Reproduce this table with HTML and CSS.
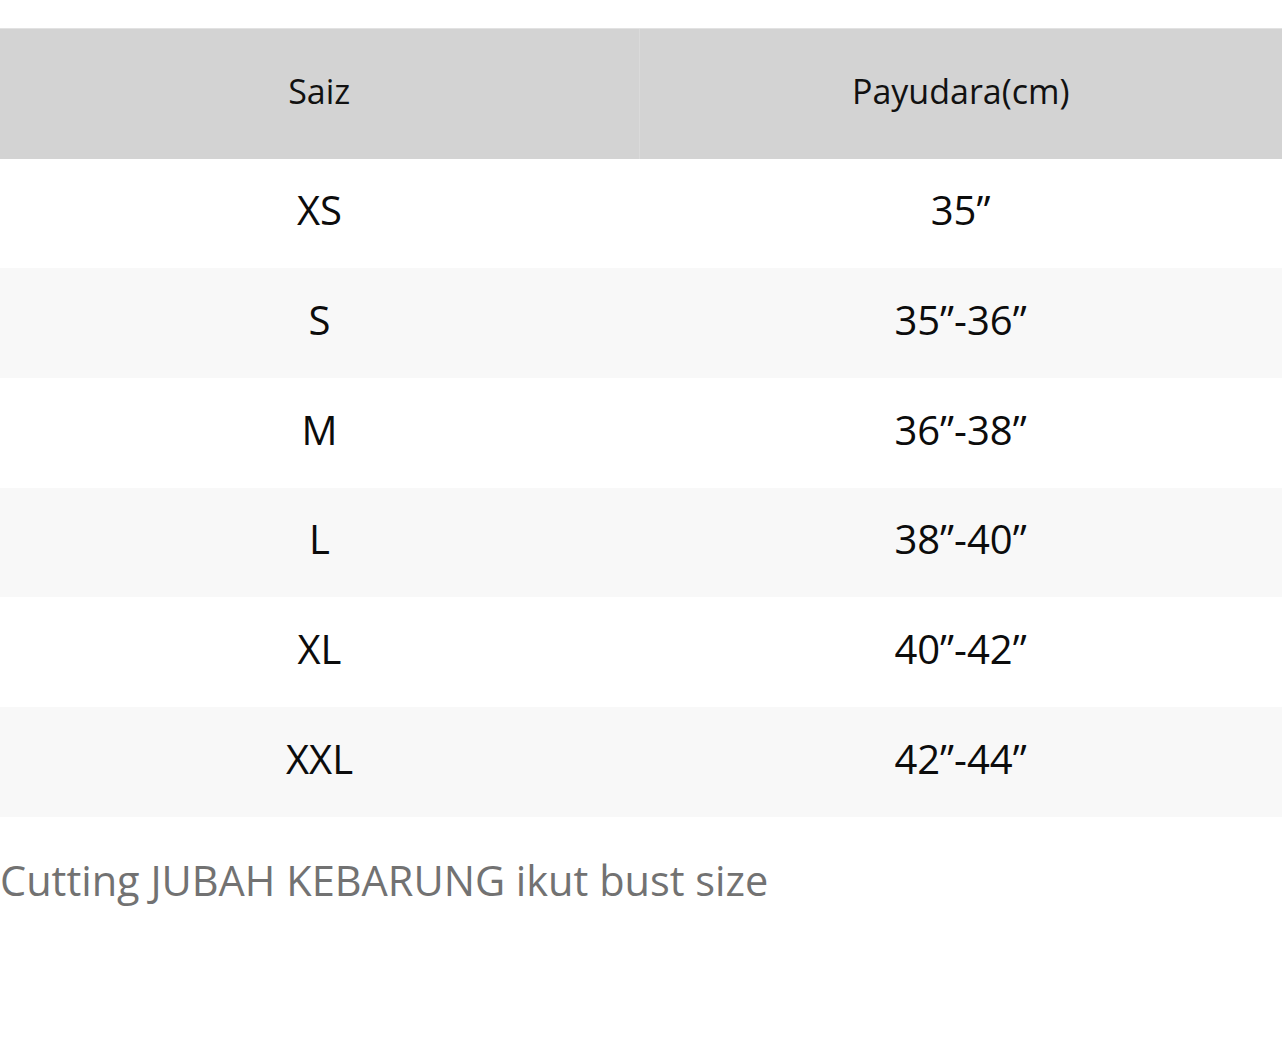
FILE: index.html
```html
<!DOCTYPE html>
<html lang="ms">
<head>
<meta charset="utf-8">
<title>Saiz</title>
<link rel="stylesheet" href="styles.css">
</head>
<body>
<div class="page">
  <table class="size-table">
    <colgroup><col class="col-a"><col class="col-b"></colgroup>
    <thead>
      <tr class="head-row"><th>Saiz</th><th>Payudara(cm)</th></tr>
    </thead>
    <tbody>
      <tr class="body-row"><td>XS</td><td>35”</td></tr>
      <tr class="body-row"><td>S</td><td>35”-36”</td></tr>
      <tr class="body-row"><td>M</td><td>36”-38”</td></tr>
      <tr class="body-row"><td>L</td><td>38”-40”</td></tr>
      <tr class="body-row"><td>XL</td><td>40”-42”</td></tr>
      <tr class="body-row"><td>XXL</td><td>42”-44”</td></tr>
    </tbody>
  </table>
  <p class="note">Cutting JUBAH KEBARUNG ikut bust size</p>
</div>
</body>
</html>
```

FILE: styles.css
```css
html, body {
  margin: 0;
  padding: 0;
  background: #ffffff;
}
.page {
  padding-top: 28px;
  font-family: "Open Sans", "Noto Sans", sans-serif;
}
.size-table {
  width: 1282px;
  border-collapse: collapse;
  table-layout: fixed;
}
.col-a { width: 639px; }
.col-b { width: 643px; }
.head-row { height: 130px; }
.body-row { height: 109.7px; }
.size-table th {
  padding: 0 0 5px;
  background: #d3d3d3;
  font-weight: 400;
  font-size: 34px;
  color: #111;
  text-align: center;
  vertical-align: middle;
  border-top: 1px solid #e2e2e2;
}
.size-table th + th {
  border-left: 1px solid #dadada;
}
.size-table td {
  padding: 0 0 7px;
  font-size: 40px;
  color: #0c0c0c;
  text-align: center;
  vertical-align: middle;
}
.size-table tbody tr:nth-child(even) td {
  background: #f8f8f8;
}
.note {
  margin: 36px 0 0;
  font-size: 41.5px;
  line-height: 54px;
  color: #727272;
}
```
